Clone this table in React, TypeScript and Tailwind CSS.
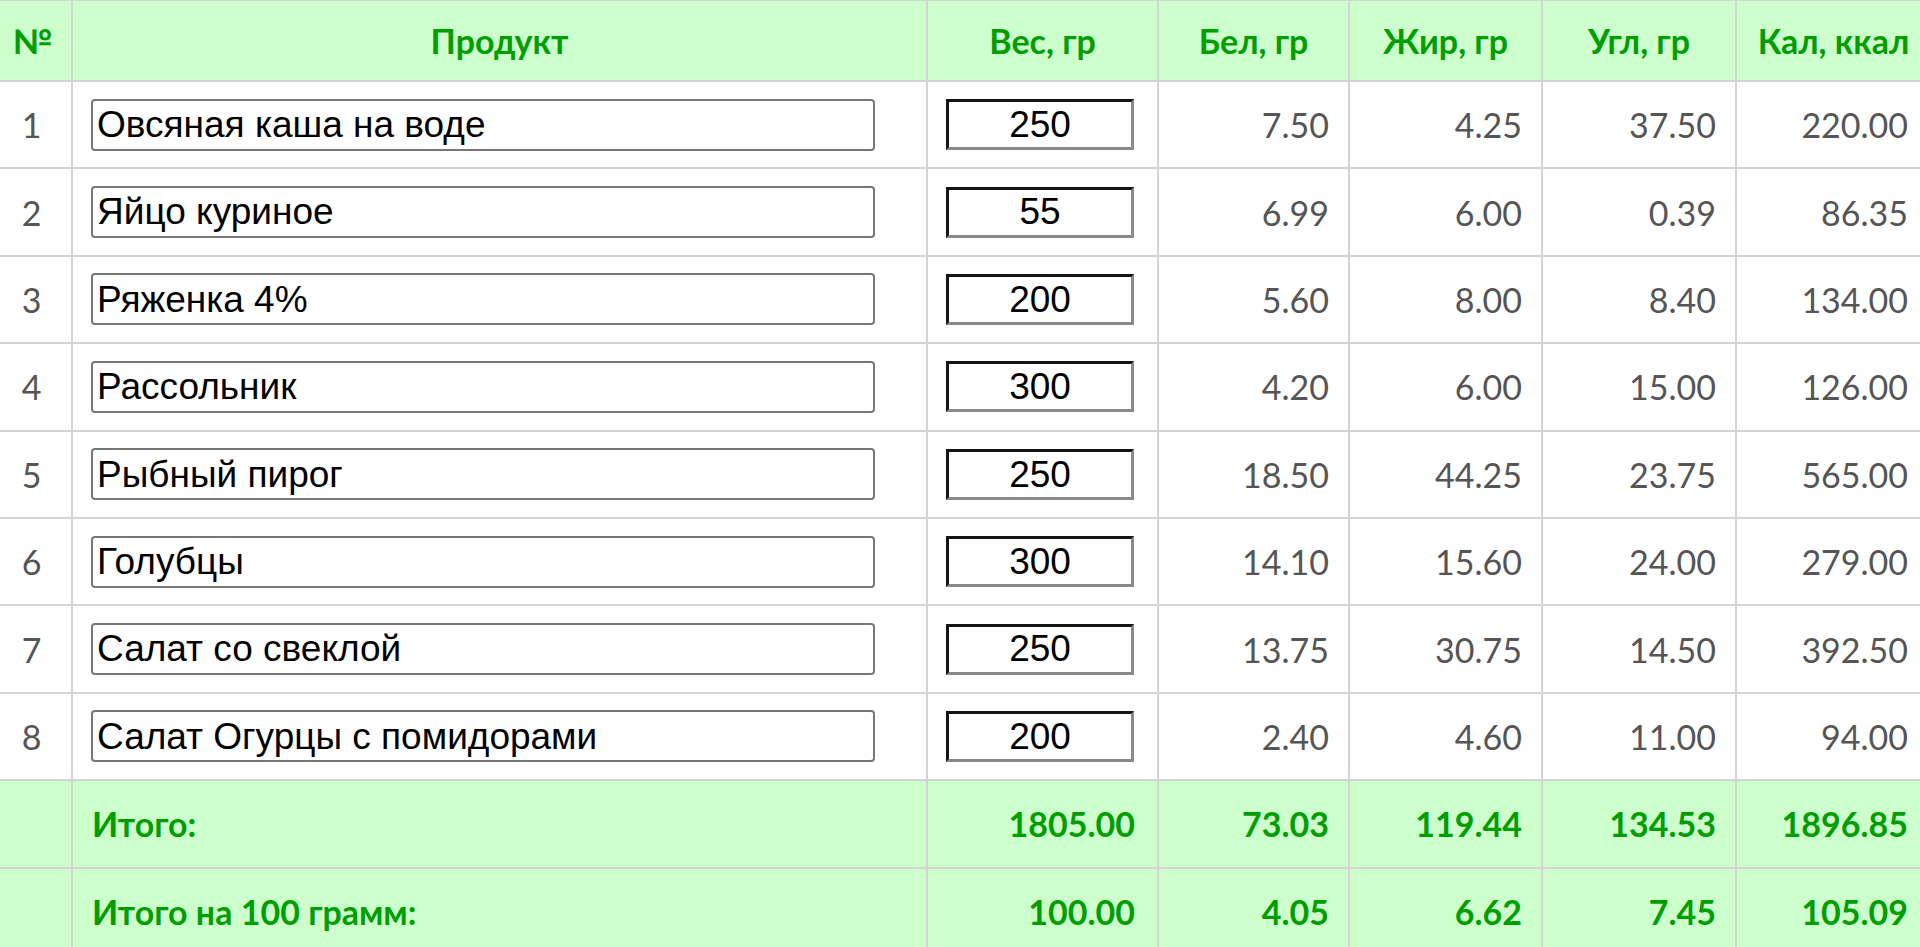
import React from "react";

const rows = [
  { name: "Овсяная каша на воде", weight: "250", p: "7.50", f: "4.25", c: "37.50", k: "220.00" },
  { name: "Яйцо куриное", weight: "55", p: "6.99", f: "6.00", c: "0.39", k: "86.35" },
  { name: "Ряженка 4%", weight: "200", p: "5.60", f: "8.00", c: "8.40", k: "134.00" },
  { name: "Рассольник", weight: "300", p: "4.20", f: "6.00", c: "15.00", k: "126.00" },
  { name: "Рыбный пирог", weight: "250", p: "18.50", f: "44.25", c: "23.75", k: "565.00" },
  { name: "Голубцы", weight: "300", p: "14.10", f: "15.60", c: "24.00", k: "279.00" },
  { name: "Салат со свеклой", weight: "250", p: "13.75", f: "30.75", c: "14.50", k: "392.50" },
  { name: "Салат Огурцы с помидорами", weight: "200", p: "2.40", f: "4.60", c: "11.00", k: "94.00" },
];

const totals = [
  { label: "Итого:", values: ["1805.00", "73.03", "119.44", "134.53", "1896.85"] },
  { label: "Итого на 100 грамм:", values: ["100.00", "4.05", "6.62", "7.45", "105.09"] },
];

const headers = ["Вес, гр", "Бел, гр", "Жир, гр", "Угл, гр", "Кал, ккал"];

const cell = "border-2 border-[#d4d4d4]";

export default function App() {
  return (
    <div className="w-[1920px] h-[947px] overflow-hidden bg-white font-['Lato',sans-serif]">
      <table className="table-fixed border-collapse w-[1932px] -mt-[1px] -ml-[2px] text-[34px]">
        <colgroup>
          <col className="w-[73px]" />
          <col className="w-[855px]" />
          <col className="w-[231px]" />
          <col className="w-[191px]" />
          <col className="w-[193px]" />
          <col className="w-[194px]" />
          <col className="w-[195px]" />
        </colgroup>
        <thead>
          <tr className="bg-[#ccffcc] text-[#009e00] font-bold h-[81px]">
            <th className={`${cell} text-center pr-[6px]`}>№</th>
            <th className={`${cell} text-center`}>Продукт</th>
            {headers.map((h) => (
              <th key={h} className={`${cell} text-center`}>
                {h}
              </th>
            ))}
          </tr>
        </thead>
        <tbody>
          {rows.map((r, i) => (
            <tr key={r.name} className="h-[87.4px] text-[#555555]">
              <td className={`${cell} text-center pr-[8px]`}>{i + 1}</td>
              <td className={`${cell} pl-[18px]`}>
                <input
                  readOnly
                  value={r.name}
                  className="block w-[784px] h-[52px] rounded-[4px] border-2 border-[#777777] bg-white px-[4px] text-[37px] text-black font-['Liberation_Sans',Arial,sans-serif] outline-none"
                />
              </td>
              <td className={`${cell} pl-[18px]`}>
                <input
                  readOnly
                  value={r.weight}
                  className="block w-[188px] h-[51px] border-[3px] border-t-[#151515] border-l-[#151515] border-b-[#8a8a8a] border-r-[#8a8a8a] bg-white text-center text-[37px] text-black font-['Liberation_Sans',Arial,sans-serif] outline-none"
                />
              </td>
              {[r.p, r.f, r.c, r.k].map((v, j) => (
                <td key={j} className={`${cell} text-right ${j === 3 ? "pr-[22px]" : "pr-[19px]"}`}>
                  {v}
                </td>
              ))}
            </tr>
          ))}
          {totals.map((t) => (
            <tr key={t.label} className="h-[87.4px] bg-[#ccffcc] text-[#009e00] font-bold">
              <td className={cell}></td>
              <td className={`${cell} pl-[19px]`}>{t.label}</td>
              {t.values.map((v, j) => (
                <td
                  key={j}
                  className={`${cell} text-right ${j === 0 || j === 4 ? "pr-[22px]" : "pr-[19px]"}`}
                >
                  {v}
                </td>
              ))}
            </tr>
          ))}
        </tbody>
      </table>
    </div>
  );
}
